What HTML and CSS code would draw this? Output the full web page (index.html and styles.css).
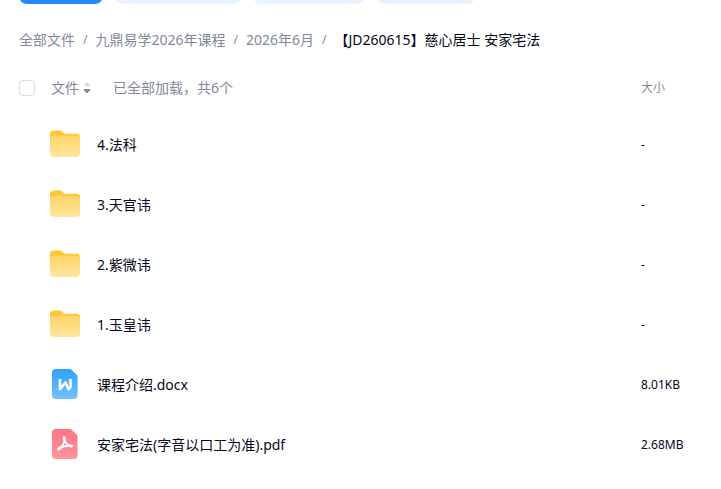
FILE: index.html
```html
<!DOCTYPE html>
<html lang="zh-CN">
<head>
    <meta charset="UTF-8">
    <meta name="viewport" content="width=device-width, initial-scale=1.0">
    <title>全部文件</title>
    <link rel="stylesheet" href="styles.css">
</head>
<body>

<svg class="symbols" aria-hidden="true">
    <defs>
        <linearGradient id="folderFill" x1="0" y1="0" x2="0" y2="1">
            <stop offset="0" stop-color="#ffd567"/>
            <stop offset="1" stop-color="#ffe59f"/>
        </linearGradient>
        <linearGradient id="docFill" x1="0" y1="0" x2="0" y2="1">
            <stop offset="0" stop-color="#2fa0fd"/>
            <stop offset="1" stop-color="#75c2ff"/>
        </linearGradient>
        <linearGradient id="pdfFill" x1="0" y1="0" x2="0" y2="1">
            <stop offset="0" stop-color="#ff7582"/>
            <stop offset="1" stop-color="#ff959c"/>
        </linearGradient>
    </defs>
    <symbol id="folder" viewBox="0 0 32 32">
        <path fill="#ffc736" d="M0 5.500a4 4 0 0 1 4-4h5.500c1.200 0 2 .4 2.800 1.200l1.700 1.500c.5.500.9.600 1.500.6H27a3 3 0 0 1 3 3v8H0z"/>
        <path fill="url(#folderFill)" d="M0 10.300A3.500 3.500 0 0 1 3.500 6.800h23a3.500 3.500 0 0 1 3.500 3.500V24a4 4 0 0 1-4 4H4a4 4 0 0 1-4-4z"/>
    </symbol>
    <symbol id="doc" viewBox="0 0 32 32">
        <path fill="url(#docFill)" d="M2 4a4 4 0 0 1 4-4h13.500c.8 0 1.500.3 2 .8l5.300 5c.5.500.8 1.200.8 2V26a4 4 0 0 1-4 4H6a4 4 0 0 1-4-4z"/>
        <path fill="none" stroke="#fff" stroke-width="2.600" stroke-linejoin="round" d="M10 10v10.300l5.500-6.800 3 6.800 2-2.300V10"/>
    </symbol>
    <symbol id="pdf" viewBox="0 0 32 32">
        <path fill="url(#pdfFill)" d="M2 4a4 4 0 0 1 4-4h13.500c.8 0 1.500.3 2 .8l5.300 5c.5.500.8 1.200.8 2V26a4 4 0 0 1-4 4H6a4 4 0 0 1-4-4z"/>
        <path fill="none" stroke="#fff" stroke-width="1.800" stroke-linecap="round" stroke-linejoin="round" d="M14.800 12.500L11.500 18l7-1.500z"/>
        <path fill="none" stroke="#fff" stroke-width="2.800" stroke-linecap="round" d="M14 8.500l.6 3.500M8.500 20l3-2M18.200 16.400l3.300.8"/>
    </symbol>
</svg>

<div class="toolbar">
    <button class="btn btn-primary" aria-label="下载"></button>
    <button class="btn btn-wide" aria-label="新建文件夹"></button>
    <button class="btn btn-mid" aria-label="分享"></button>
    <button class="btn" aria-label="更多"></button>
</div>

<nav class="breadcrumb">
    <a href="#">全部文件</a>
    <span class="slash">/</span>
    <a href="#">九鼎易学2026年课程</a>
    <span class="slash">/</span>
    <a href="#">2026年6月</a>
    <span class="slash">/</span>
    <span class="current">【JD260615】慈心居士 安家宅法</span>
</nav>

<table class="files">
    <thead>
        <tr>
            <th class="check"><input type="checkbox" aria-label="全选"></th>
            <th>
                <div class="heading">
                    <button class="sort">文件
                        <svg width="6" height="12" viewBox="0 0 6 12">
                            <path fill="#d4d7de" d="M3 0l3 3v1H0V3z"/>
                            <path fill="#818999" d="M0 7h6v1.500L3 11.500 0 8.500z"/>
                        </svg>
                    </button>
                    <span>已全部加载，共6个</span>
                </div>
            </th>
            <th class="size">大小</th>
        </tr>
    </thead>
    <tbody>
        <tr>
            <td></td>
            <td><a class="name" href="#"><svg class="icon"><use href="#folder"/></svg>4.法科</a></td>
            <td class="size">-</td>
        </tr>
        <tr>
            <td></td>
            <td><a class="name" href="#"><svg class="icon"><use href="#folder"/></svg>3.天官讳</a></td>
            <td class="size">-</td>
        </tr>
        <tr>
            <td></td>
            <td><a class="name" href="#"><svg class="icon"><use href="#folder"/></svg>2.紫微讳</a></td>
            <td class="size">-</td>
        </tr>
        <tr>
            <td></td>
            <td><a class="name" href="#"><svg class="icon"><use href="#folder"/></svg>1.玉皇讳</a></td>
            <td class="size">-</td>
        </tr>
        <tr>
            <td></td>
            <td><a class="name" href="#"><svg class="icon"><use href="#doc"/></svg>课程介绍.docx</a></td>
            <td class="size">8.01KB</td>
        </tr>
        <tr>
            <td></td>
            <td><a class="name" href="#"><svg class="icon"><use href="#pdf"/></svg>安家宅法(字音以口工为准).pdf</a></td>
            <td class="size">2.68MB</td>
        </tr>
    </tbody>
</table>

</body>
</html>
```
FILE: styles.css
```css
*{
    margin: 0;
    padding: 0;
    box-sizing: border-box;
}

body{
    background: #fff;
    color: #03081a;
    font-family: "Noto Sans", "Noto Sans CJK SC", sans-serif;
    font-size: 14px;
    line-height: 20px;
}

a{
    color: inherit;
    text-decoration: none;
}

button{
    border: 0;
    background: none;
    color: inherit;
    font: inherit;
    cursor: pointer;
}

.symbols{
    position: absolute;
    width: 0;
    height: 0;
}

/* only the lower edge of the buttons stays in view */
.toolbar{
    display: flex;
    align-items: flex-end;
    gap: 12px;
    height: 4px;
    padding-left: 19px;
    overflow: hidden;
}

.btn{
    flex: none;
    width: 98px;
    height: 32px;
    border-radius: 8px;
    background: #e8f3ff;
}

.btn-primary{
    width: 84px;
    background: #2489fd;
}

.btn-wide{
    width: 126px;
}

.btn-mid{
    width: 112px;
}

.breadcrumb{
    display: flex;
    gap: 8px;
    padding: 26px 19px 11px;
    color: #818999;
    white-space: nowrap;
}

.slash{
    font-size: 12px;
}

.current{
    color: #03081a;
}

.files{
    width: 100%;
    border-collapse: collapse;
    table-layout: fixed;
}

.files th{
    height: 54px;
    color: #818999;
    font-weight: 400;
    text-align: left;
}

.files td{
    height: 60px;
}

.files .check{
    width: 50px;
    padding-left: 19px;
}

.check input{
    display: block;
    appearance: none;
    width: 16px;
    height: 16px;
    border: 1px solid #d9dce5;
    border-radius: 4px;
    background: #fff;
}

.check input:checked{
    background: #2489fd;
}

.heading{
    display: flex;
    gap: 23px;
    padding-left: 1px;
}

.sort{
    display: flex;
    align-items: center;
    gap: 5px;
}

.files .size{
    width: 80px;
    font-size: 12px;
}

.name{
    display: flex;
    align-items: center;
    gap: 15px;
}

.icon{
    width: 32px;
    height: 32px;
}
```
